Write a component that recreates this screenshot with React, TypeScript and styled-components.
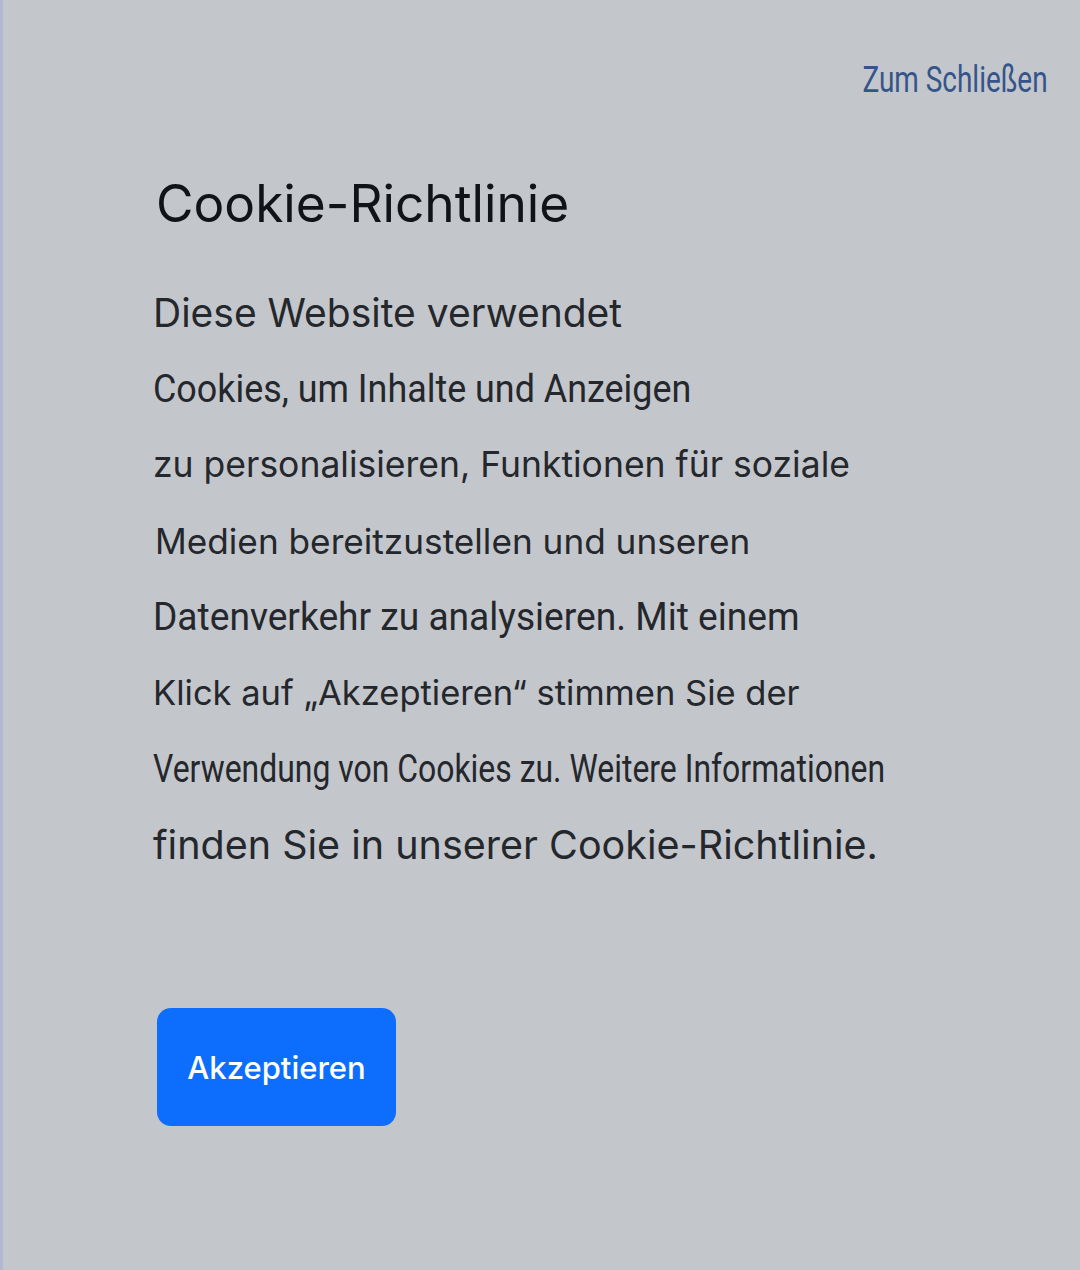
import styled, { createGlobalStyle } from 'styled-components';

const GlobalStyle = createGlobalStyle`
  html, body {
    margin: 0;
    padding: 0;
    background: #c3c6cb;
  }
  body {
    font-family: Inter, "Noto Sans", sans-serif;
  }
`;

const Page = styled.div`
  width: 1080px;
  height: 1270px;
  box-sizing: border-box;
  background: #c3c6cb;
  border-left: 3px solid #b2b8d4;
  padding: 60px 32px 0 150px;
  display: flex;
  flex-direction: column;
`;

const TopBar = styled.div`
  display: flex;
  justify-content: flex-end;
`;

const CloseLink = styled.a`
  font-family: Roboto, "Liberation Sans", sans-serif;
  font-size: 36px;
  line-height: 40px;
  color: #35548a;
  text-decoration: none;
  transform: scaleX(0.776);
  transform-origin: right center;
  cursor: pointer;
`;

const Title = styled.h1`
  margin: 73px 0 0 3px;
  font-family: Inter, sans-serif;
  font-weight: 400;
  font-size: 51.4px;
  line-height: 60px;
  color: #111316;
`;

const Body = styled.div`
  margin-top: 42px;
  display: flex;
  flex-direction: column;
`;

const Line = styled.div<{ $size: number; $condensed?: boolean; $scale?: number; $indent?: number }>`
  height: 76px;
  line-height: 76px;
  font-size: ${p => p.$size}px;
  font-family: ${p => (p.$condensed ? 'Roboto, "Liberation Sans", sans-serif' : 'Inter, sans-serif')};
  color: #24272b;
  white-space: nowrap;
  padding-left: ${p => p.$indent ?? 0}px;
  transform-origin: left center;
  transform: scaleX(${p => p.$scale ?? 1});
`;

const AcceptButton = styled.button`
  margin: 125px 0 0 4px;
  width: 239px;
  height: 118px;
  border: none;
  border-radius: 14px;
  background: #0d6efd;
  color: #ffffff;
  font-family: Inter, sans-serif;
  font-weight: 500;
  font-size: 31px;
  cursor: pointer;
`;

const lines: { text: string; size: number; condensed?: boolean; scale?: number; indent?: number }[] = [
  { text: 'Diese Website verwendet', size: 39 },
  { text: 'Cookies, um Inhalte und Anzeigen', size: 39, condensed: true, scale: 0.92 },
  { text: 'zu personalisieren, Funktionen für soziale', size: 35.5 },
  { text: 'Medien bereitzustellen und unseren', size: 35.2, indent: 2 },
  { text: 'Datenverkehr zu analysieren. Mit einem', size: 39.5, condensed: true, scale: 0.94 },
  { text: 'Klick auf „Akzeptieren“ stimmen Sie der', size: 34.5 },
  { text: 'Verwendung von Cookies zu. Weitere Informationen', size: 38, condensed: true, scale: 0.84 },
  { text: 'finden Sie in unserer Cookie-Richtlinie.', size: 39.5 },
];

export default function App() {
  return (
    <>
      <GlobalStyle />
      <Page>
        <TopBar>
          <CloseLink>Zum Schließen</CloseLink>
        </TopBar>
        <Title>Cookie-Richtlinie</Title>
        <Body>
          {lines.map((l, i) => (
            <Line key={i} $size={l.size} $condensed={l.condensed} $scale={l.scale} $indent={l.indent}>
              {l.text}
            </Line>
          ))}
        </Body>
        <AcceptButton>Akzeptieren</AcceptButton>
      </Page>
    </>
  );
}
